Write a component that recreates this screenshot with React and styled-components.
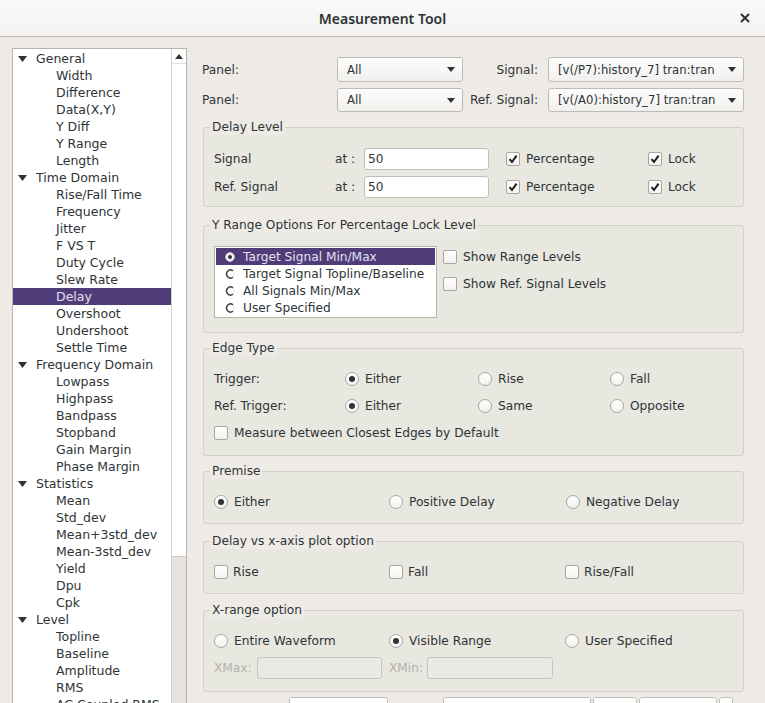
import React from "react"
import styled, { createGlobalStyle } from "styled-components"

const GlobalStyle = createGlobalStyle`
	html, body {
		margin: 0;
		padding: 0;
	}
	body {
		background: #eeebe7;
		font-family: "DejaVu Sans", "Noto Sans", sans-serif;
		font-size: 12.5px;
		color: #2e3436;
	}
`

const Window = styled.div`
	width: 765px;
	height: 703px;
	overflow: hidden;
	display: flex;
	flex-direction: column;
	background: #eeebe7;
`

const TitleBar = styled.div`
	height: 36px;
	flex: none;
	display: grid;
	grid-template-columns: 1fr auto 1fr;
	align-items: center;
	background: linear-gradient(#fafafa, #f3f2f1);
	border-bottom: 1px solid #bdb8b2;
`

const Title = styled.div`
	grid-column: 2;
	font-family: "Noto Sans", sans-serif;
	font-size: 14px;
	font-weight: 600;
	color: #2e3436;
`

const Close = styled.div`
	grid-column: 3;
	justify-self: end;
	margin-right: 15px;
	display: flex;
	align-items: center;
`

const Body = styled.div`
	flex: 1;
	min-height: 0;
	display: flex;
	gap: 15px;
	padding: 11px 0 0 12px;
`

const Tree = styled.div`
	width: 175px;
	flex: none;
	display: flex;
	background: #fff;
	border: 1px solid #b7b3ac;
	border-bottom: none;
	box-sizing: border-box;
	overflow: hidden;
`

const TreeList = styled.div`
	flex: 1;
	padding-top: 1px;
`

const TreeRow = styled.div`
	height: 17px;
	display: flex;
	align-items: center;
	padding-left: ${(p) => (p.$child ? 43 : 5)}px;
	white-space: nowrap;
	background: ${(p) => (p.$selected ? "#4f3c79" : "transparent")};
	color: ${(p) => (p.$selected ? "#e4e1ee" : "#2e3436")};
`

const Expander = styled.svg`
	width: 9px;
	height: 6px;
	margin-right: 9px;
	flex: none;
`

const Scrollbar = styled.div`
	width: 14px;
	flex: none;
	display: flex;
	flex-direction: column;
	border-left: 1px solid #d6d2cc;
	background: #e6e3de;
`

const ScrollUp = styled.div`
	height: 14px;
	display: flex;
	align-items: center;
	justify-content: center;
	background: #fff;
	border-bottom: 1px solid #e2dfda;
`

const ScrollThumb = styled.div`
	height: 492px;
	background: #fff;
	border-bottom: 1px solid #cfcbc5;
`

const Main = styled.div`
	width: 542px;
	flex: none;
	display: flex;
	flex-direction: column;
	font-size: 12.2px;
	& > * {
		flex-shrink: 0;
	}
`

const TopRow = styled.div`
	display: flex;
	align-items: center;
	height: ${(p) => p.$h}px;
	margin-top: ${(p) => p.$mt}px;
`

const Label = styled.span`
	width: ${(p) => p.$w}px;
	flex: none;
	text-align: ${(p) => (p.$right ? "right" : "left")};
	padding-right: ${(p) => (p.$right ? 10 : 0)}px;
	box-sizing: border-box;
	white-space: nowrap;
	color: ${(p) => (p.$disabled ? "#b3b2aa" : "#2e3436")};
`

const ComboBox = styled.div`
	width: ${(p) => p.$w}px;
	height: 100%;
	box-sizing: border-box;
	display: flex;
	align-items: center;
	justify-content: space-between;
	padding: 0 7px 0 9px;
	border: 1px solid #bfbbb4;
	border-radius: 3px;
	background: linear-gradient(#fdfdfd, #f1f0ee);
	white-space: nowrap;
	font-size: 11.7px;
`

const Group = styled.fieldset`
	margin: ${(p) => p.$mt}px 0 0 1px;
	padding: ${(p) => p.$pt}px 10px ${(p) => p.$pb}px 10px;
	border: 1px solid #d3d0c8;
	border-radius: 3px;
	background: #e8e7e0;
	min-width: 0;
`

const Legend = styled.legend`
	margin-left: -4px;
	padding: 0 2px;
	line-height: 16px;
	background: #eeebe7;
	color: #2e3436;
`

const GridRow = styled.div`
	display: grid;
	grid-template-columns: ${(p) => p.$cols};
	align-items: center;
	height: ${(p) => p.$h || 20}px;
	margin-top: ${(p) => p.$mt || 0}px;
	white-space: nowrap;
`

const TextInput = styled.div`
	height: 22px;
	box-sizing: border-box;
	display: flex;
	align-items: center;
	padding-left: 3px;
	border: 1px solid ${(p) => (p.$disabled ? "#c9c6be" : "#c2beb7")};
	border-radius: 3px;
	background: ${(p) => (p.$disabled ? "#ebe9e4" : "#fff")};
`

const Option = styled.span`
	display: flex;
	align-items: center;
	gap: ${(p) => p.$gap || 6}px;
	white-space: nowrap;
`

const Box = styled.span`
	width: 14px;
	height: 14px;
	box-sizing: border-box;
	flex: none;
	display: flex;
	align-items: center;
	justify-content: center;
	border: 1px solid #aaa69f;
	border-radius: ${(p) => (p.$round ? "50%" : "2px")};
	background: linear-gradient(#ffffff, #f3f2f0);
`

const Dot = styled.span`
	width: 6px;
	height: 6px;
	border-radius: 50%;
	background: #2e3436;
`

const RangeBody = styled.div`
	display: flex;
	gap: 6px;
`

const RangeList = styled.div`
	width: 223px;
	box-sizing: border-box;
	padding: 1px;
	background: #fff;
	border: 1px solid #b7b3ac;
`

const RangeItem = styled.div`
	height: 17px;
	display: flex;
	align-items: center;
	gap: 8px;
	padding-left: 9px;
	white-space: nowrap;
	background: ${(p) => (p.$selected ? "#4f3c79" : "transparent")};
	color: ${(p) => (p.$selected ? "#e4e1ee" : "#2e3436")};
`

const RangeSide = styled.div`
	display: flex;
	flex-direction: column;
	gap: 13px;
	padding-top: 4px;
`

const BottomRow = styled.div`
	display: grid;
	grid-template-columns: 87px 101px 53px 150px 46px 80px 16px;
	margin-top: 5px;
	height: 24px;
`

const Stub = styled.div`
	grid-column: ${(p) => p.$col};
	margin-right: 2px;
	background: #fff;
	border: 1px solid #c2beb7;
	border-radius: 3px;
`

const Arrow = ({ up }) => (
	<svg width="8" height="5" viewBox="0 0 8 5">
		<path d={up ? "M0 5 L4 0 L8 5 Z" : "M0 0 L8 0 L4 5 Z"} fill="#2e3436" />
	</svg>
)

const Check = ({ on }) => (
	<Box>
		{on && (
			<svg width="10" height="10" viewBox="0 0 10 10">
				<path d="M1.5 5.2 L4 8 L8.6 1.6" fill="none" stroke="#1c1c1c" strokeWidth="2" />
			</svg>
		)}
	</Box>
)

const Radio = ({ on }) => <Box $round>{on && <Dot />}</Box>

const ListRadio = ({ on }) =>
	on ? (
		<svg width="10" height="10" viewBox="0 0 10 10">
			<circle cx="5" cy="5" r="4.3" fill="#f4f4f4" stroke="#d8d4e4" strokeWidth="1" />
			<circle cx="5" cy="5" r="2" fill="#2e3436" />
		</svg>
	) : (
		<svg width="10" height="10" viewBox="0 0 10 10">
			<circle cx="5" cy="5" r="4" fill="#fff" stroke="#e2e0dc" strokeWidth="1" />
			<path d="M8 1.8 A4 4 0 1 0 8 8.2" fill="none" stroke="#3a3a3a" strokeWidth="1.4" />
		</svg>
	)

const tree = [
	["General", ["Width", "Difference", "Data(X,Y)", "Y Diff", "Y Range", "Length"]],
	[
		"Time Domain",
		["Rise/Fall Time", "Frequency", "Jitter", "F VS T", "Duty Cycle", "Slew Rate", "Delay", "Overshoot", "Undershoot", "Settle Time"],
	],
	["Frequency Domain", ["Lowpass", "Highpass", "Bandpass", "Stopband", "Gain Margin", "Phase Margin"]],
	["Statistics", ["Mean", "Std_dev", "Mean+3std_dev", "Mean-3std_dev", "Yield", "Dpu", "Cpk"]],
	["Level", ["Topline", "Baseline", "Amplitude", "RMS", "AC Coupled RMS"]],
]

const rangeOptions = ["Target Signal Min/Max", "Target Signal Topline/Baseline", "All Signals Min/Max", "User Specified"]

const App = () => {
	return (
		<Window>
			<GlobalStyle />
			<TitleBar>
				<Title>Measurement Tool</Title>
				<Close>
					<svg width="10" height="10" viewBox="0 0 10 10">
						<path d="M1 1 L9 9 M9 1 L1 9" stroke="#2e3436" strokeWidth="2" />
					</svg>
				</Close>
			</TitleBar>
			<Body>
				<Tree>
					<TreeList>
						{tree.map(([group, items]) => (
							<React.Fragment key={group}>
								<TreeRow>
									<Expander viewBox="0 0 9 6">
										<path d="M0 0 L9 0 L4.5 6 Z" fill="#2e3436" />
									</Expander>
									{group}
								</TreeRow>
								{items.map((item) => (
									<TreeRow key={item} $child $selected={item === "Delay"}>
										{item}
									</TreeRow>
								))}
							</React.Fragment>
						))}
					</TreeList>
					<Scrollbar>
						<ScrollUp>
							<Arrow up />
						</ScrollUp>
						<ScrollThumb />
					</Scrollbar>
				</Tree>

				<Main>
					<TopRow $h={25} $mt={9}>
						<Label $w={135}>Panel:</Label>
						<ComboBox $w={126}>
							All <Arrow />
						</ComboBox>
						<Label $w={85} $right>
							Signal:
						</Label>
						<ComboBox $w={196}>
							[v(/P7):history_7] tran:tran <Arrow />
						</ComboBox>
					</TopRow>
					<TopRow $h={24} $mt={6}>
						<Label $w={135}>Panel:</Label>
						<ComboBox $w={126}>
							All <Arrow />
						</ComboBox>
						<Label $w={85} $right>
							Ref. Signal:
						</Label>
						<ComboBox $w={196}>
							[v(/A0):history_7] tran:tran <Arrow />
						</ComboBox>
					</TopRow>

					<Group $mt={7} $pt={13} $pb={8}>
						<Legend>Delay Level</Legend>
						{["Signal", "Ref. Signal"].map((name, i) => (
							<GridRow key={name} $cols="121px 29px 125px 17px 142px auto" $h={22} $mt={i ? 6 : 0}>
								<span>{name}</span>
								<span>at :</span>
								<TextInput>50</TextInput>
								<span />
								<Option>
									<Check on /> Percentage
								</Option>
								<Option>
									<Check on /> Lock
								</Option>
							</GridRow>
						))}
					</Group>

					<Group $mt={10} $pt={13} $pb={14}>
						<Legend>Y Range Options For Percentage Lock Level</Legend>
						<RangeBody>
							<RangeList>
								{rangeOptions.map((opt, i) => (
									<RangeItem key={opt} $selected={i === 0}>
										<ListRadio on={i === 0} />
										{opt}
									</RangeItem>
								))}
							</RangeList>
							<RangeSide>
								<Option>
									<Check /> Show Range Levels
								</Option>
								<Option>
									<Check /> Show Ref. Signal Levels
								</Option>
							</RangeSide>
						</RangeBody>
					</Group>

					<Group $mt={7} $pt={13} $pb={12}>
						<Legend>Edge Type</Legend>
						<GridRow $cols="131px 133px 132px auto">
							<span>Trigger:</span>
							<Option>
								<Radio on /> Either
							</Option>
							<Option>
								<Radio /> Rise
							</Option>
							<Option>
								<Radio /> Fall
							</Option>
						</GridRow>
						<GridRow $cols="131px 133px 132px auto" $mt={7}>
							<span>Ref. Trigger:</span>
							<Option>
								<Radio on /> Either
							</Option>
							<Option>
								<Radio /> Same
							</Option>
							<Option>
								<Radio /> Opposite
							</Option>
						</GridRow>
						<GridRow $cols="auto" $mt={7}>
							<Option>
								<Check /> Measure between Closest Edges by Default
							</Option>
						</GridRow>
					</Group>

					<Group $mt={7} $pt={13} $pb={11}>
						<Legend>Premise</Legend>
						<GridRow $cols="175px 177px auto">
							<Option>
								<Radio on /> Either
							</Option>
							<Option>
								<Radio /> Positive Delay
							</Option>
							<Option>
								<Radio /> Negative Delay
							</Option>
						</GridRow>
					</Group>

					<Group $mt={9} $pt={13} $pb={11}>
						<Legend>Delay vs x-axis plot option</Legend>
						<GridRow $cols="175px 176px auto">
							<Option $gap={5}>
								<Check /> Rise
							</Option>
							<Option $gap={5}>
								<Check /> Fall
							</Option>
							<Option $gap={5}>
								<Check /> Rise/Fall
							</Option>
						</GridRow>
					</Group>

					<Group $mt={8} $pt={13} $pb={12}>
						<Legend>X-range option</Legend>
						<GridRow $cols="175px 176px auto">
							<Option>
								<Radio /> Entire Waveform
							</Option>
							<Option>
								<Radio on /> Visible Range
							</Option>
							<Option>
								<Radio /> User Specified
							</Option>
						</GridRow>
						<GridRow $cols="43px 125px 7px 38px 126px" $h={22} $mt={6}>
							<Label $disabled>XMax:</Label>
							<TextInput $disabled />
							<span />
							<Label $disabled>XMin:</Label>
							<TextInput $disabled />
						</GridRow>
					</Group>

					<BottomRow>
						<Stub $col={2} />
						<Stub $col={4} />
						<Stub $col={5} />
						<Stub $col={6} />
						<Stub $col={7} />
					</BottomRow>
				</Main>
			</Body>
		</Window>
	)
}

export default App
